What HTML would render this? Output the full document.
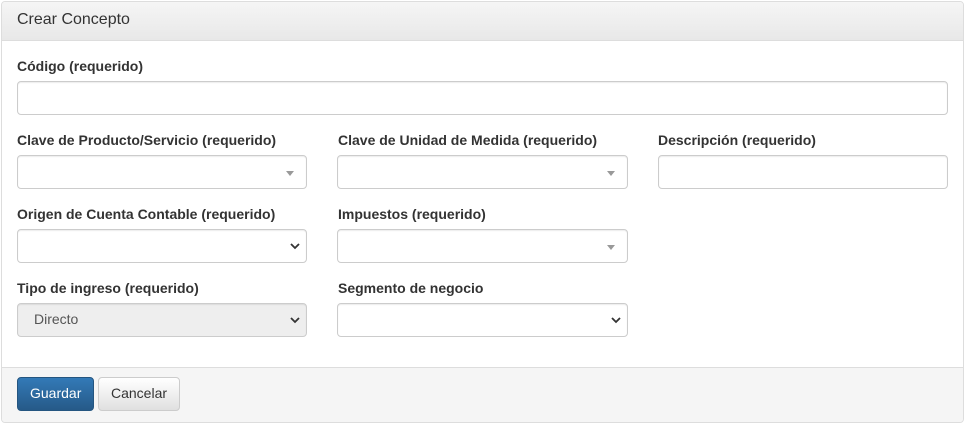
<!DOCTYPE html>
<html><head><meta charset="utf-8"><style>
*{box-sizing:border-box}
body{margin:0;width:965px;height:425px;background:#fff;font-family:"Liberation Sans",Arial,sans-serif;font-size:14px;color:#333;position:relative;overflow:hidden}
.panel{position:absolute;left:1px;top:1px;width:963px;height:422px;border:1px solid #ddd;border-radius:4px;overflow:hidden}
.head{position:absolute;left:0;top:0;right:0;height:39px;background:linear-gradient(#f5f5f5,#e8e8e8);border-bottom:1px solid #ddd;padding:9px 15px;font-size:16px;color:#333}
.foot{position:absolute;left:0;right:0;top:365px;bottom:0;background:#f5f5f5;border-top:1px solid #ddd}
.lbl{position:absolute;font-weight:bold;font-size:14px;color:#333}
.inp{position:absolute;height:34px;border:1px solid #ccc;border-radius:4px;background:#fff;box-shadow:inset 0 1px 1px rgba(0,0,0,.075)}
.tri:after{content:"";position:absolute;right:12px;top:15px;border-left:4px solid transparent;border-right:4px solid transparent;border-top:5px solid #999}
.chev svg{position:absolute;right:5px;top:12px}
.btn{position:absolute;top:377px;height:34px;border-radius:4px;padding:7px 12px;font-size:14px}
</style></head><body>
<div class="panel">
<div class="head">Crear Concepto</div>
<div class="foot"></div>
</div>
<div class="lbl" style="left:17px;top:58px">Código (requerido)</div>
<div class="inp" style="left:17px;top:81px;width:931px"></div>

<div class="lbl" style="left:17px;top:132px">Clave de Producto/Servicio (requerido)</div>
<div class="inp tri" style="left:17px;top:155px;width:290px"></div>
<div class="lbl" style="left:338px;top:132px">Clave de Unidad de Medida (requerido)</div>
<div class="inp tri" style="left:337px;top:155px;width:291px"></div>
<div class="lbl" style="left:658px;top:132px">Descripción (requerido)</div>
<div class="inp" style="left:658px;top:155px;width:290px"></div>

<div class="lbl" style="left:17px;top:206px">Origen de Cuenta Contable (requerido)</div>
<div class="inp chev" style="left:17px;top:229px;width:290px"><svg width="12" height="8" viewBox="0 0 12 8"><path d="M2 2l4 4 4-4" stroke="#333" stroke-width="1.8" fill="none"/></svg></div>
<div class="lbl" style="left:338px;top:206px">Impuestos (requerido)</div>
<div class="inp tri" style="left:337px;top:229px;width:291px"></div>

<div class="lbl" style="left:17px;top:280px">Tipo de ingreso (requerido)</div>
<div class="inp chev" style="left:17px;top:303px;width:290px;background:#eee;padding:7px 16px;color:#555">Directo<svg width="12" height="8" viewBox="0 0 12 8"><path d="M2 2l4 4 4-4" stroke="#333" stroke-width="1.8" fill="none"/></svg></div>
<div class="lbl" style="left:338px;top:280px">Segmento de negocio</div>
<div class="inp chev" style="left:337px;top:303px;width:291px"><svg width="12" height="8" viewBox="0 0 12 8"><path d="M2 2l4 4 4-4" stroke="#333" stroke-width="1.8" fill="none"/></svg></div>

<div class="btn" style="left:17px;width:77px;color:#fff;background:linear-gradient(#337ab7,#265a88);border:1px solid #245580">Guardar</div>
<div class="btn" style="left:98px;width:82px;color:#333;background:linear-gradient(#fff,#e0e0e0);border:1px solid #ccc">Cancelar</div>
</body></html>
